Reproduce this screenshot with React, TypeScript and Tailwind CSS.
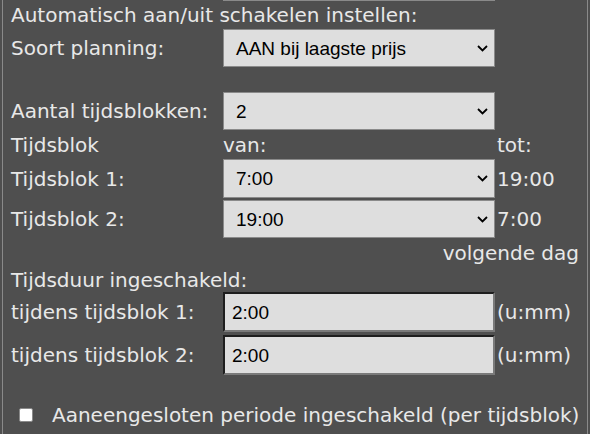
import React from 'react';

const Chevron = () => (
  <svg width="11" height="7" viewBox="0 0 11 7" className="shrink-0">
    <path d="M1 1 L5.5 5.5 L10 1" fill="none" stroke="#000" strokeWidth="1.8" />
  </svg>
);

const FakeSelect = ({ value, h = 'h-[38px]' }: { value: string; h?: string }) => (
  <div
    className={`w-[272px] ${h} bg-[#dedede] border border-[#8a8a8a] flex items-center justify-between pl-[12px] pr-[6px] text-black text-[19px] font-['Liberation_Sans',Arial,sans-serif]`}
  >
    <span>{value}</span>
    <Chevron />
  </div>
);

const TimeInput = ({ value }: { value: string }) => (
  <div className="w-[272px] h-[40px] bg-[#dedede] border-2 border-t-[#1e1e1e] border-l-[#1e1e1e] border-b-[#7a7a7a] border-r-[#7a7a7a] flex items-center pl-[7px] text-black text-[19px] font-['Liberation_Sans',Arial,sans-serif]">
    {value}
  </div>
);

const Label = ({ children }: { children: React.ReactNode }) => (
  <div className="w-[220px] pl-[8px] shrink-0">{children}</div>
);

export default function App() {
  return (
    <div className="w-[590px] h-[434px] bg-[#4f4f4f] overflow-hidden font-['DejaVu_Sans',Verdana,sans-serif]">
      <div className="ml-[2px] w-[586px] h-full border-l border-r border-[#8a8a8a] text-[#e8e8e8] text-[20px] leading-none flex flex-col">
        {/* bottom edge of the control above */}
        <div className="h-[1px] flex">
          <div className="w-[220px]" />
          <div className="w-[272px] bg-[#8a8a8a]" />
        </div>

        <div className="h-[28px] flex items-center pl-[8px]">Automatisch aan/uit schakelen instellen:</div>

        <div className="h-[38px] flex items-center">
          <Label>Soort planning:</Label>
          <FakeSelect value="AAN bij laagste prijs" />
        </div>

        <div className="h-[25px]" />

        <div className="h-[38px] flex items-center">
          <Label>Aantal tijdsblokken:</Label>
          <FakeSelect value="2" />
        </div>

        <div className="h-[29px] flex items-center">
          <Label>Tijdsblok</Label>
          <div className="w-[274px]">van:</div>
          <div>tot:</div>
        </div>

        <div className="h-[39px] flex items-center">
          <Label>Tijdsblok 1:</Label>
          <FakeSelect value="7:00" h="h-[39px]" />
          <div className="pl-[2px]">19:00</div>
        </div>

        <div className="h-[2px]" />

        <div className="h-[38px] flex items-center">
          <Label>Tijdsblok 2:</Label>
          <FakeSelect value="19:00" />
          <div className="pl-[2px]">7:00</div>
        </div>

        <div className="h-[28px] flex items-center justify-end pr-[8px] pt-[2px]">volgende dag</div>

        <div className="h-[26px] flex items-center pl-[8px] pt-[2px]">Tijdsduur ingeschakeld:</div>

        <div className="h-[40px] flex items-center">
          <Label>tijdens tijdsblok 1:</Label>
          <TimeInput value="2:00" />
          <div className="pl-[2px]">(u:mm)</div>
        </div>

        <div className="h-[3px]" />

        <div className="h-[40px] flex items-center">
          <Label>tijdens tijdsblok 2:</Label>
          <TimeInput value="2:00" />
          <div className="pl-[2px]">(u:mm)</div>
        </div>

        <div className="h-[27px]" />

        <div className="h-[26px] flex items-center pl-[16px]">
          <div className="w-[14px] h-[14px] bg-white border border-[#8a8a8a] rounded-[2px] shrink-0" />
          <div className="pl-[19px] whitespace-nowrap">Aaneengesloten periode ingeschakeld (per tijdsblok)</div>
        </div>
      </div>
    </div>
  );
}
